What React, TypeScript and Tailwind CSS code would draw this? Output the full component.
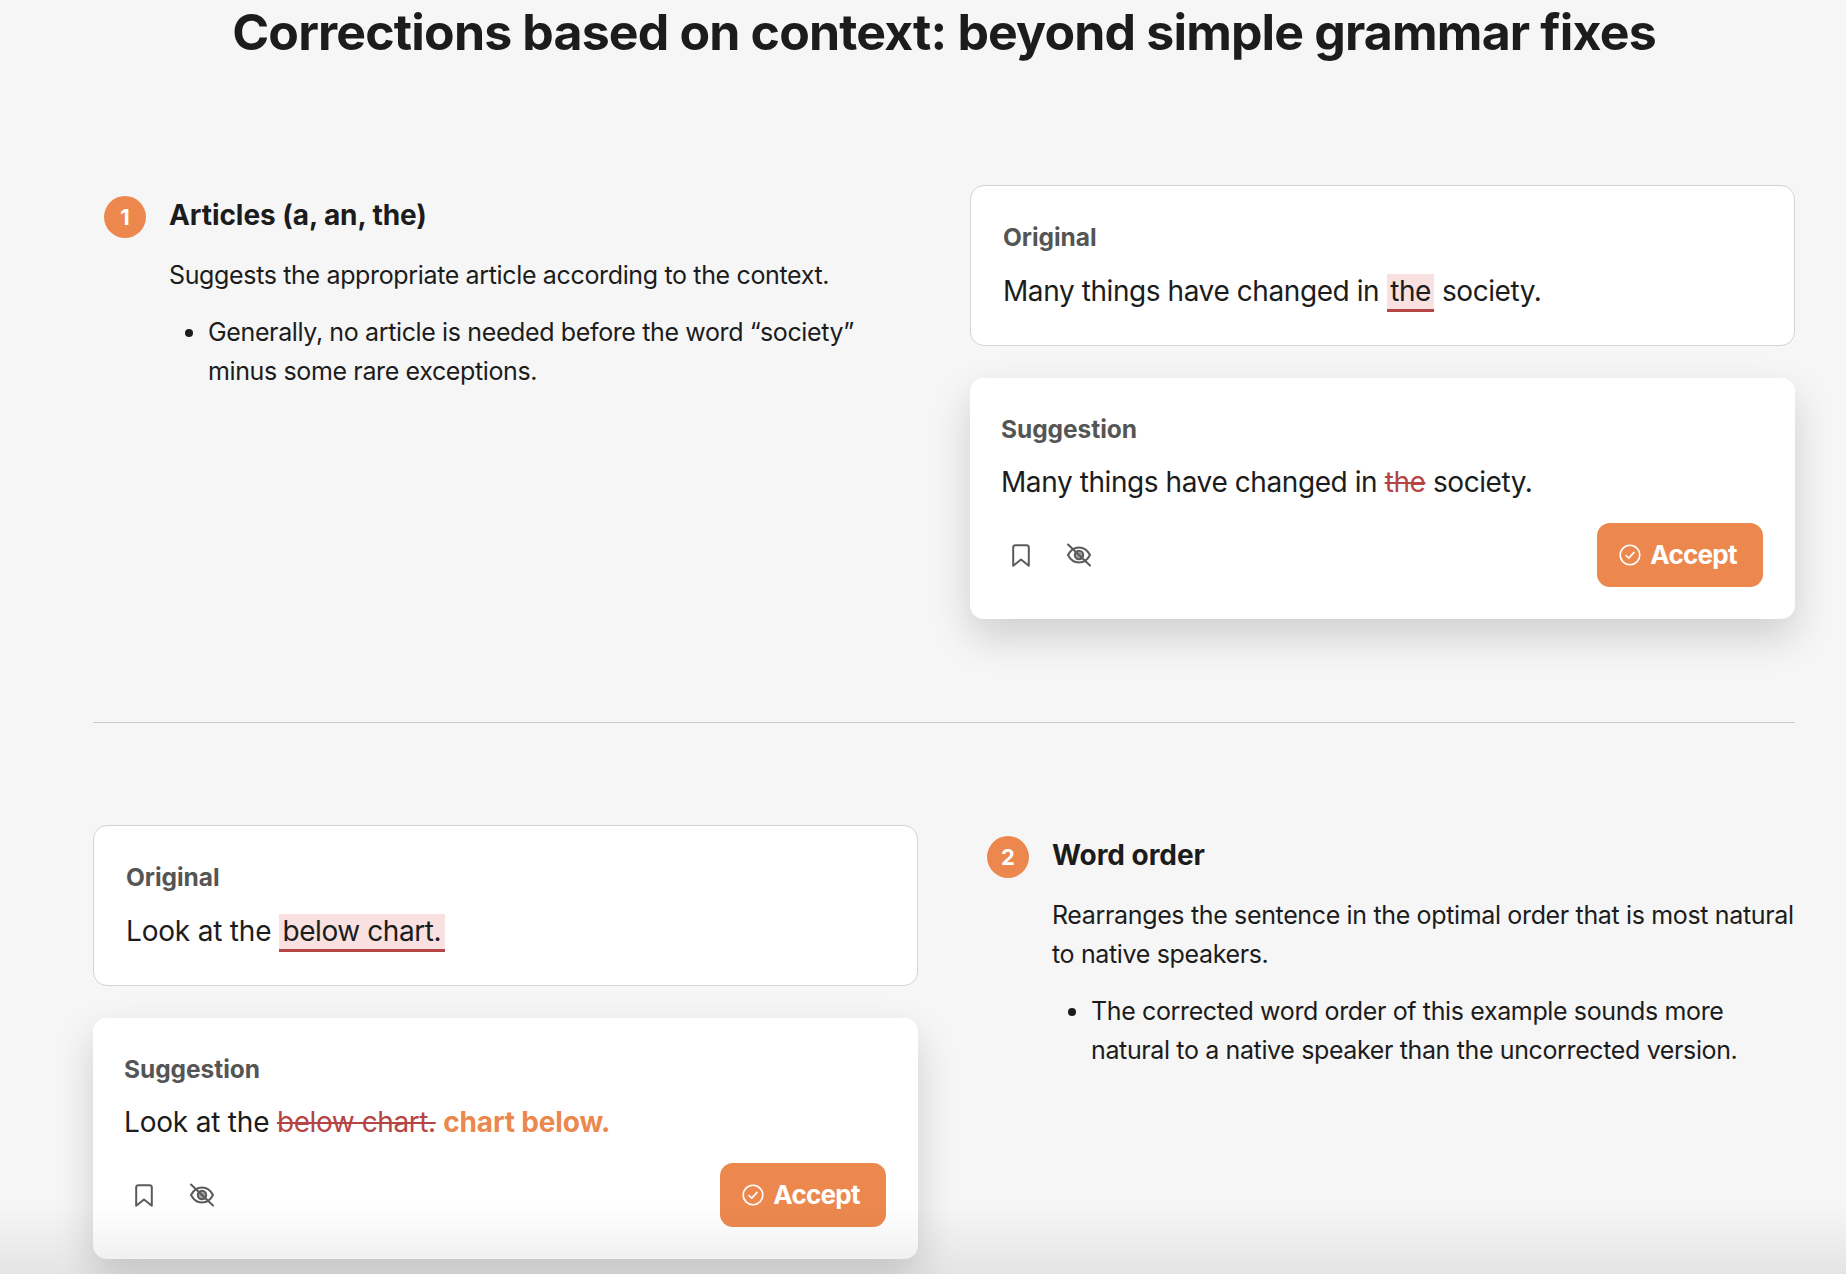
import React from "react";

function BookmarkIcon() {
  return (
    <svg width="18" height="23" viewBox="0 0 18 23" fill="none" stroke="#5a5a5a" strokeWidth="2" strokeLinejoin="round">
      <path d="M1.2 21.8V3.5a2.3 2.3 0 0 1 2.3-2.3h11a2.3 2.3 0 0 1 2.3 2.3v18.3L9 15.5z" />
    </svg>
  );
}

function EyeIcon() {
  return (
    <svg width="26" height="24" viewBox="0 0 26 24" fill="none" stroke="#5a5a5a" strokeWidth="2" strokeLinecap="round">
      <path d="M2 12C4.500 7.200 8.200 4.500 13 4.500s8.500 2.700 11 7.500c-2.500 4.800-6.200 7.500-11 7.500S4.500 16.800 2 12z" />
      <circle cx="13" cy="12" r="4.200" fill="#a0a0a0" />
      <path d="M2 1.500l22 21" />
    </svg>
  );
}

function CheckCircle() {
  return (
    <svg width="22" height="22" viewBox="0 0 22 22" fill="none" stroke="#fff" strokeWidth="1.6" strokeLinecap="round" strokeLinejoin="round">
      <circle cx="11" cy="11" r="9.800" />
      <path d="M7 11.500l2.800 2.600L15 8.400" />
    </svg>
  );
}

function Bad({ children }: { children: React.ReactNode }) {
  return <span className="bg-[#f9e1e1] border-b-[3px] border-[#b54545] px-[3.500px] pb-[1px]">{children}</span>;
}

function Del({ children }: { children: React.ReactNode }) {
  return <span className="text-[#b54545] line-through decoration-2">{children}</span>;
}

function Lead({ children }: { children: React.ReactNode }) {
  return <span className="tracking-[-0.2px]">{children}</span>;
}

function OriginalCard({ children }: { children: React.ReactNode }) {
  return (
    <div className="h-[161px] rounded-[14px] border border-[#d4d4d4] bg-white px-[32px] pt-[34px]">
      <div className="text-[24.500px] leading-[34px] font-bold tracking-[-0.05px] text-[#555555]">Original</div>
      <div className="mt-[20px] text-[28px] leading-[34px] tracking-[-0.42px] text-[#1c1c1c]">{children}</div>
    </div>
  );
}

function SuggestionCard({ children }: { children: React.ReactNode }) {
  return (
    <div className="h-[241px] rounded-[14px] bg-white pt-[34px] pr-[32px] pb-[32px] pl-[31px] shadow-[0_18px_40px_rgba(0,0,0,0.16)]">
      <div className="text-[24.500px] leading-[34px] font-bold tracking-[-0.05px] text-[#555555]">Suggestion</div>
      <div className="mt-[19px] text-[28px] leading-[34px] tracking-[-0.42px] text-[#1c1c1c]">{children}</div>
      <div className="mt-[24px] flex items-center justify-between">
        <div className="flex items-center gap-[36px] pl-[11px]">
          <BookmarkIcon />
          <EyeIcon />
        </div>
        <button className="flex h-[64px] w-[166px] items-center justify-center gap-[9px] rounded-[13px] bg-[#ec884e] pr-[4px] text-[26px] leading-[30px] font-bold tracking-[-0.75px] text-white">
          <CheckCircle />
          Accept
        </button>
      </div>
    </div>
  );
}

function Explain({
  n,
  title,
  body,
  bullet,
}: {
  n: number;
  title: string;
  body: React.ReactNode;
  bullet: React.ReactNode;
}) {
  return (
    <div className="flex gap-[23px]">
      <div className="mt-[11px] flex h-[42px] w-[42px] shrink-0 items-center justify-center rounded-full bg-[#ec884e] text-[22px] font-bold text-white">
        {n}
      </div>
      <div>
        <h2 className="mt-[13px] text-[28px] leading-[34px] font-bold tracking-[-0.06px] text-[#1c1c1c]">{title}</h2>
        <p className="mt-[24px] text-[25px] leading-[39px] tracking-[-0.35px] text-[#1c1c1c]">{body}</p>
        <ul className="mt-[18px] list-disc pl-[39px] text-[25px] leading-[39px] tracking-[-0.37px] text-[#1c1c1c]">
          <li>{bullet}</li>
        </ul>
      </div>
    </div>
  );
}

export default function App() {
  return (
    <div
      className="relative h-[1274px] overflow-hidden bg-[#f6f6f6] pl-[93px] pr-[51px]"
      style={{ fontFamily: "Inter, sans-serif" }}
    >
      <h1 className="pt-[3px] text-center text-[50px] leading-[58px] font-bold tracking-[-0.84px] text-[#1c1c1c]">
        Corrections based on context: beyond simple grammar fixes
      </h1>

      <section className="mt-[124px] grid grid-cols-2 gap-[52px] pb-[103px]">
        <div className="pl-[11px]">
          <Explain
            n={1}
            title="Articles (a, an, the)"
            body="Suggests the appropriate article according to the context."
            bullet="Generally, no article is needed before the word “society” minus some rare exceptions."
          />
        </div>
        <div className="flex flex-col gap-[32px]">
          <OriginalCard>
            Many things have changed in <Bad>the</Bad> society.
          </OriginalCard>
          <SuggestionCard>
            Many things have changed in <Del>the</Del> society.
          </SuggestionCard>
        </div>
      </section>

      <hr className="border-t border-[#c9c9c9]" />

      <section className="mt-[102px] grid grid-cols-2 gap-[52px]">
        <div className="flex flex-col gap-[32px]">
          <OriginalCard>
            <Lead>Look at the </Lead>
            <Bad>below chart.</Bad>
          </OriginalCard>
          <SuggestionCard>
            <Lead>Look at the </Lead>
            <Del>below chart.</Del>{" "}
            <span className="font-bold tracking-[-0.15px] text-[#ec884e]">chart below.</span>
          </SuggestionCard>
        </div>
        <div className="pl-[17px]">
          <Explain
            n={2}
            title="Word order"
            body="Rearranges the sentence in the optimal order that is most natural to native speakers."
            bullet="The corrected word order of this example sounds more natural to a native speaker than the uncorrected version."
          />
        </div>
      </section>

      <div className="pointer-events-none absolute inset-x-0 bottom-0 h-[70px] bg-gradient-to-b from-transparent to-[#00000012]" />
    </div>
  );
}
